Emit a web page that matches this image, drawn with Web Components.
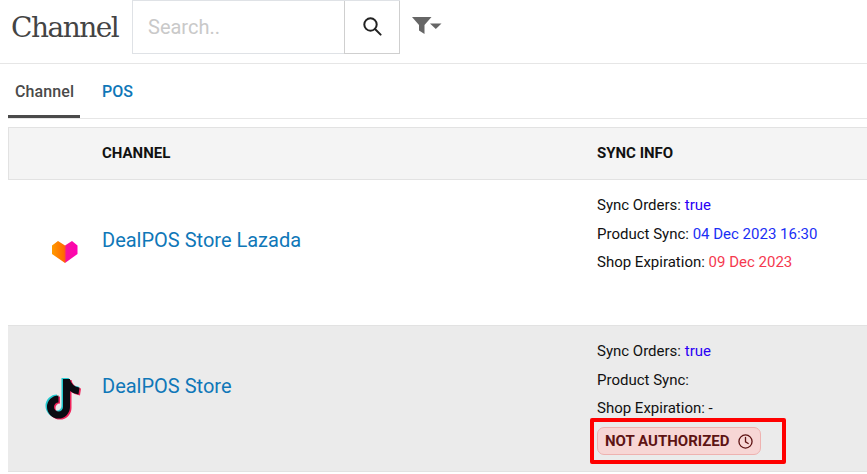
<!DOCTYPE html>
<html>
<head>
<meta charset="utf-8">
<title>Channel</title>
<style>
  html, body { margin: 0; height: 100%; overflow: hidden; background: #fff; }
  body { font-family: Roboto, "Liberation Sans", sans-serif; color: #111; }
</style>
</head>
<body>
<channel-page></channel-page>

<script>
const define = (name, html) => {
  const template = document.createElement('template');
  template.innerHTML = html;
  customElements.define(name, class extends HTMLElement {
    constructor() {
      super();
      const shadow = this.attachShadow({ mode: 'open' });
      shadow.appendChild(template.content.cloneNode(true));
    }
  });
};

define('page-header', `
  <style>
    :host { display: flex; align-items: flex-start; height: 63px; border-bottom: 1px solid #e6e6e6; }
    h1 { margin: 10px 13px 0 11px; width: 108px; font: 400 28px/36px "DejaVu Serif", serif; letter-spacing: -1.5px; color: #444; white-space: nowrap; }
    .search { display: flex; width: 268px; height: 54px; box-sizing: border-box; border: 1px solid #dfe2e6; }
    .field { flex: 1; padding-left: 15px; font-size: 20px; line-height: 52px; color: #c9c9c9; }
    .go { width: 56px; display: flex; align-items: center; justify-content: center; padding-bottom: 3px; box-sizing: border-box; border: 1px solid #cfcfcf; border-width: 0 1px 1px 1px; margin: 0 -1px -1px 0; }
    .filter { margin: 17px 0 0 12px; display: block; }
  </style>
  <h1>Channel</h1>
  <div class="search">
    <div class="field">Search..</div>
    <div class="go">
      <svg width="20" height="20" viewBox="0 0 20 20" fill="none" stroke="#222" stroke-width="2"><circle cx="8.500" cy="8.500" r="6.200"/><path d="M13 13l5.600 5.600" stroke-linecap="round"/></svg>
    </div>
  </div>
  <svg class="filter" width="30" height="18" viewBox="0 0 30 18" fill="#666"><path d="M0 0h19.500l-7 8v9l-5.500-3.500v-5.500z"/><path d="M18 6.500h11.500l-5.700 5.600z"/></svg>
`);

define('tab-bar', `
  <style>
    :host { display: flex; height: 54px; margin-left: 8px; border-bottom: 1px solid #e6e6e6; font-size: 16px; font-weight: 500; line-height: 56px; }
    a { display: block; height: 54px; box-sizing: border-box; color: #0f77b8; text-decoration: none; }
    a.active { width: 72px; padding-left: 7px; margin-right: 22px; color: #4a4a4a; border-bottom: 3px solid #4a4a4a; white-space: nowrap; letter-spacing: .1px; }
  </style>
  <a class="active" href="#channel" onclick="return false">Channel</a>
  <a href="#pos" onclick="return false">POS</a>
`);

define('channel-row', `
  <style>
    :host { display: grid; grid-template-columns: 94px 495px 1fr; position: relative; box-sizing: border-box; border-bottom: 1px solid #e2e2e2; }
    .logo { display: flex; justify-content: center; padding: var(--logo-top) 0 0 18px; box-sizing: border-box; }
    .name { padding-top: 48px; font-size: 20px; line-height: 24px; color: #0f77b8; }
    .info { padding-top: var(--info-top); font-size: 15px; line-height: 28.500px; color: #111; }
  </style>
  <div class="logo"><slot name="logo"></slot></div>
  <div class="name"><slot name="name"></slot></div>
  <div class="info"><slot></slot></div>
  <slot name="overlay"></slot>
`);

define('status-pill', `
  <style>
    :host { display: inline-flex; align-items: center; gap: 9px; height: 28px; box-sizing: border-box; padding: 0 7px; border: 1px solid #eeb2b0; border-radius: 7px; background: #f7d6d5; color: #5e1414; font-size: 15px; font-weight: 700; line-height: 1; }
    svg { display: block; }
  </style>
  <slot></slot>
  <svg width="15" height="15" viewBox="0 0 16 16" fill="none" stroke="#5e1414" stroke-width="1.400"><circle cx="8" cy="8" r="7"/><path d="M8 3.600V8.300l2.900 1.800" stroke-linecap="round"/></svg>
`);

define('channel-page', `
  <style>
    :host { display: block; }
    .table { margin: 8px 0 0 8px; }
    .head { display: grid; grid-template-columns: 93px 495px 1fr; height: 53px; box-sizing: border-box; background: #f4f4f4; border: 1px solid #e2e2e2; border-right: 0; font-size: 15px; font-weight: 700; line-height: 51px; color: #111; }
    .one { height: 146px; --logo-top: 61px; --info-top: 11px; background: #fff; }
    .two { height: 146px; --logo-top: 51px; --info-top: 11px; background: #ebebeb; }
    svg { display: block; }
    .true { color: #2a00f5; }
    .date { color: #1a2ff5; }
    .expiry { color: #f5394f; }
    .mark { position: absolute; left: 582px; top: 92px; width: 196px; height: 46px; box-sizing: border-box; border: 4px solid #f00; border-radius: 2px; padding: 5px 0 0 3px; }
  </style>
  <page-header></page-header>
  <tab-bar></tab-bar>
  <div class="table">
    <div class="head"><div></div><div>CHANNEL</div><div>SYNC INFO</div></div>
    <channel-row class="one">
      <svg slot="logo" width="26" height="22" viewBox="0 0 26 22" style="margin-left:1px">
        <defs><linearGradient id="lg" x1="0" x2="1"><stop offset="0" stop-color="#ff9a00"/><stop offset=".48" stop-color="#ff6a00"/><stop offset=".56" stop-color="#f5139c"/><stop offset="1" stop-color="#ff00b4"/></linearGradient></defs>
        <path d="M0 4.500 6 0l7 4.500L20 0l5.500 4.500V13L13 22 0 13z" fill="url(#lg)"/>
      </svg>
      <span slot="name">DealPOS Store Lazada</span>
      Sync Orders: <span class="true">true</span><br>
      Product Sync: <span class="date">04 Dec 2023 16:30</span><br>
      Shop Expiration: <span class="expiry">09 Dec 2023</span>
    </channel-row>
    <channel-row class="two">
      <svg slot="logo" width="38" height="44" viewBox="0 0 38 44" fill="none">
        <g stroke-width="7" fill="none">
          <path d="M21.500 2v28a8 8 0 1 1-8-8" stroke="#25c9d0" transform="translate(-1.500 -1)"/>
          <path d="M21.500 2v28a8 8 0 1 1-8-8" stroke="#f0245c" transform="translate(1.500 1)"/>
          <path d="M21.500 3c1.500 6 6 10 12.500 11" stroke="#25c9d0" transform="translate(-1 -1)"/>
          <path d="M21.500 3c1.500 6 6 10 12.500 11" stroke="#f0245c" transform="translate(1.500 1)"/>
          <path d="M21.500 2v28a8 8 0 1 1-8-8" stroke="#0b0b12"/>
          <path d="M21.500 3c1.500 6 6 10 12.500 11" stroke="#0b0b12"/>
        </g>
      </svg>
      <span slot="name">DealPOS Store</span>
      Sync Orders: <span class="true">true</span><br>
      Product Sync:<br>
      Shop Expiration: -
      <div slot="overlay" class="mark"><status-pill>NOT AUTHORIZED</status-pill></div>
    </channel-row>
  </div>
`);
</script>
</body>
</html>
